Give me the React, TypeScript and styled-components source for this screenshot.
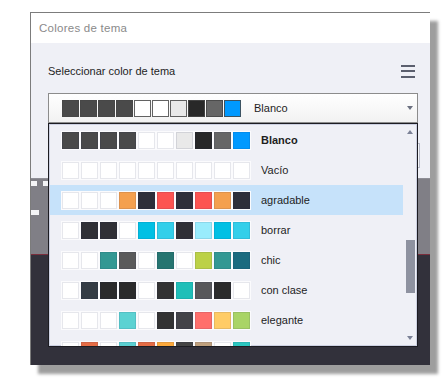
import React from 'react'
import styled, {createGlobalStyle, css} from 'styled-components'

const GlobalStyle = createGlobalStyle`
  html, body {
    margin: 0;
    padding: 0;
    background: #ffffff;
  }
  body {
    font-family: 'Liberation Sans', Arial, sans-serif;
    color: #1f1f1f;
  }
`

interface Theme {
  name: string
  colors: string[]
}

const SELECTED = ['#4a4a4a', '#4a4a4a', '#4a4a4a', '#4a4a4a', '#ffffff', '#ffffff', '#e9e9e9', '#282828', '#666666', '#0099ff']

const THEMES: Theme[] = [
  {name: 'Blanco', colors: SELECTED},
  {name: 'Vacío', colors: Array(10).fill('#ffffff')},
  {
    name: 'agradable',
    colors: ['#ffffff', '#ffffff', '#ffffff', '#f4a04f', '#2e2f3a', '#fc5451', '#2e2f3a', '#fc5451', '#f4a04f', '#2e2f3a']
  },
  {
    name: 'borrar',
    colors: ['#ffffff', '#303036', '#303036', '#ffffff', '#00c0e4', '#33cfea', '#303036', '#99ecfc', '#00c0e4', '#33cfea']
  },
  {
    name: 'chic',
    colors: ['#ffffff', '#ffffff', '#339893', '#5a5a5a', '#ffffff', '#267570', '#ffffff', '#bcd147', '#339893', '#1b6b7f']
  },
  {
    name: 'con clase',
    colors: ['#ffffff', '#343c44', '#2b2b2b', '#2b2b2b', '#ffffff', '#333333', '#1fbfb8', '#58585a', '#2b2b2b', '#ffffff']
  },
  {
    name: 'elegante',
    colors: ['#ffffff', '#ffffff', '#ffffff', '#5bd2d2', '#ffffff', '#333333', '#434348', '#ff6f6b', '#ffcc66', '#a9d466']
  },
  {
    name: 'equilibrado',
    colors: ['#ffffff', '#e56c45', '#ffffff', '#5bcfd1', '#e56c45', '#fca93c', '#444444', '#bfa07d', '#ffffff', '#2bc7c0']
  }
]

const Page = styled.div`
  padding: 12px 0 0 30px;
  height: 383px;
  box-sizing: border-box;
`

const Window = styled.div`
  width: 400px;
  height: 353px;
  box-sizing: border-box;
  border-top: 1px solid #7c7c7c;
  border-left: 1px solid #7c7c7c;
  box-shadow: 8px 9px 3px rgba(0, 0, 0, 0.38);
  display: flex;
  flex-direction: column;
  background: #32313b;
`

const TitleBar = styled.div`
  height: 30px;
  flex: none;
  display: flex;
  align-items: center;
  padding-left: 8px;
  background: #ffffff;
  color: #8a8a8a;
  font-size: 11.5px;
  letter-spacing: 0.25px;
`

const Settings = styled.div`
  height: 136px;
  flex: none;
  box-sizing: border-box;
  padding: 18px 12px 0 17px;
  background: #eff0f6;
  border-bottom: 1px solid #8e8e96;
  position: relative;
  z-index: 2;
`

const LabelRow = styled.div`
  height: 20px;
  display: flex;
  align-items: center;
  justify-content: space-between;
  font-size: 11px;
  color: #1e1e1e;
`

const MenuIcon = styled.span`
  width: 14px;
  height: 13px;
  margin-right: 3px;
  display: flex;
  flex-direction: column;
  justify-content: space-between;

  i {
    display: block;
    height: 2px;
    background: #5b5f6e;
  }
`

const SelectWrap = styled.div`
  position: relative;
  margin-top: 12px;
`

const Select = styled.div`
  height: 30px;
  box-sizing: border-box;
  border: 1px solid #8c8c8c;
  background: linear-gradient(#ffffff, #f2f2f2);
  display: flex;
  align-items: center;
  padding-left: 13px;
`

const SelectSwatches = styled.div`
  display: flex;
  gap: 1px;
`

const SelectSwatch = styled.span<{$color: string}>`
  width: 17px;
  height: 17px;
  box-sizing: border-box;
  border: 1px solid rgba(70, 70, 70, 0.85);
  background: ${p => p.$color};
`

const SelectValue = styled.span`
  margin-left: 13px;
  font-size: 11px;
  color: #1e1e1e;
`

const Triangle = styled.span<{$dir: 'up' | 'down'; $color?: string}>`
  width: 0;
  height: 0;
  border-left: 3.5px solid transparent;
  border-right: 3.5px solid transparent;
  ${p =>
    p.$dir === 'down'
      ? css`
          border-top: 4px solid ${p.$color || '#6b7080'};
        `
      : css`
          border-bottom: 4px solid ${p.$color || '#6b7080'};
        `}
`

const Caret = styled(Triangle)`
  margin-left: auto;
  margin-right: 4px;
`

const ActionRow = styled.div`
  margin-top: 20px;
  display: flex;
  justify-content: flex-end;
  margin-right: -2px;
`

const GhostButton = styled.span`
  width: 90px;
  height: 25px;
  box-sizing: border-box;
  border: 1px solid #b7bac8;
  background: #f6f7fa;
`

const Dropdown = styled.div`
  position: absolute;
  top: 100%;
  left: 0;
  width: 370px;
  height: 224px;
  box-sizing: border-box;
  border: 1px solid #1c1c22;
  background: #eff0f6;
  box-shadow: inset 0 0 0 1px #cdd1e2;
  display: flex;
  z-index: 5;
`

const List = styled.div`
  flex: 1;
  overflow: hidden;
  padding: 1px 0 0 1px;
`

const Row = styled.div<{$active?: boolean; $bold?: boolean}>`
  height: 30px;
  display: flex;
  align-items: center;
  padding-left: 11px;
  font-size: 11px;
  color: #1e1e1e;
  background: ${p => (p.$active ? '#c6e2fa' : 'transparent')};
  font-weight: ${p => (p.$bold ? 700 : 400)};
`

const Strip = styled.div`
  display: flex;
  gap: 2px;
  padding: 1px;
  background: #fbfbfd;
  margin-right: 10px;
`

const Cell = styled.span<{$color: string}>`
  width: 17px;
  height: 17px;
  background: ${p => p.$color};
  box-shadow: inset 0 0 0 1px rgba(30, 40, 80, 0.11);
`

const Scrollbar = styled.div`
  width: 14px;
  flex: none;
  display: flex;
  flex-direction: column;
  align-items: center;
  padding: 6px 0 6px;
  box-sizing: border-box;
`

const Track = styled.div`
  flex: 1;
  width: 100%;
  display: flex;
  justify-content: center;
`

const Thumb = styled.div`
  margin-top: 106px;
  width: 9px;
  height: 53px;
  background: #8e92a0;
`

const Preview = styled.div`
  height: 76px;
  flex: none;
  background: #807f86;
  display: flex;
  flex-direction: column;
  gap: 24px;
  padding-top: 2px;
  box-sizing: border-box;
  border-bottom: 1px solid #7a2e3c;
`

const MarkRow = styled.div`
  display: flex;
  gap: 6px;
`

const Mark = styled.span<{$w: number; $h: number}>`
  width: ${p => p.$w}px;
  height: ${p => p.$h}px;
  background: #f4f4f6;
`

export default function App() {
  return (
    <>
      <GlobalStyle />
      <Page>
        <Window>
          <TitleBar>Colores de tema</TitleBar>
          <Settings>
            <LabelRow>
              <span>Seleccionar color de tema</span>
              <MenuIcon>
                <i />
                <i />
                <i />
              </MenuIcon>
            </LabelRow>
            <SelectWrap>
              <Select>
                <SelectSwatches>
                  {SELECTED.map((c, i) => (
                    <SelectSwatch key={i} $color={c} />
                  ))}
                </SelectSwatches>
                <SelectValue>Blanco</SelectValue>
                <Caret $dir="down" />
              </Select>
              <Dropdown>
                <List>
                  {THEMES.map((t, i) => (
                    <Row key={t.name} $bold={i === 0} $active={t.name === 'agradable'}>
                      <Strip>
                        {t.colors.map((c, j) => (
                          <Cell key={j} $color={c} />
                        ))}
                      </Strip>
                      {t.name}
                    </Row>
                  ))}
                </List>
                <Scrollbar>
                  <Triangle $dir="up" $color="#7b8196" />
                  <Track>
                    <Thumb />
                  </Track>
                  <Triangle $dir="down" $color="#7b8196" />
                </Scrollbar>
              </Dropdown>
            </SelectWrap>
            <ActionRow>
              <GhostButton />
            </ActionRow>
          </Settings>
          <Preview>
            <MarkRow>
              <Mark $w={6} $h={5} />
              <Mark $w={6} $h={5} />
            </MarkRow>
            <MarkRow>
              <Mark $w={8} $h={5} />
            </MarkRow>
          </Preview>
        </Window>
      </Page>
    </>
  )
}
